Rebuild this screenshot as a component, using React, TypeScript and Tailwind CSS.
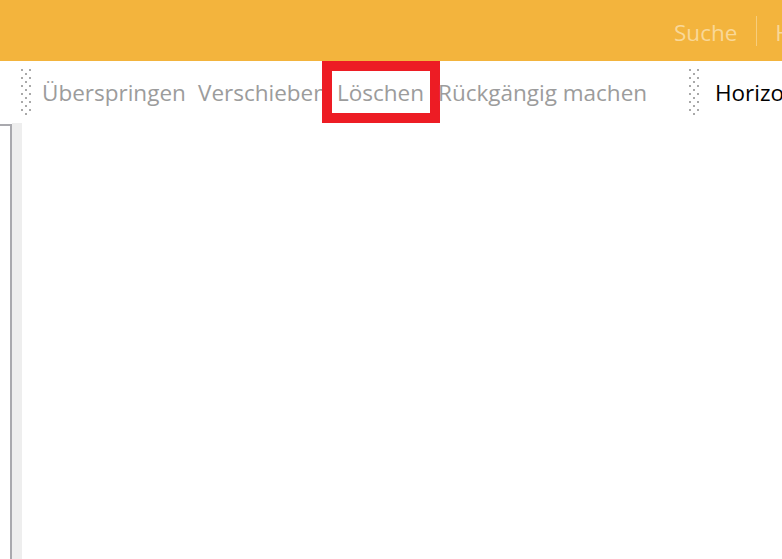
import React from "react";

const actions = [
  { label: "Überspringen", width: "w-[156px]" },
  { label: "Verschieben", width: "w-[140px]" },
  { label: "Löschen", width: "w-[100px]" },
  { label: "Rückgängig machen", width: "w-[250px]" },
];

const Gripper = () => (
  <div className="flex h-[46px] w-[10px] shrink-0 flex-col justify-between">
    {Array.from({ length: 12 }).map((_, i) => (
      <div key={i} className={`flex h-[2px] ${i % 2 === 0 ? "justify-between" : "justify-center"}`}>
        {i % 2 === 0 ? (
          <>
            <span className="h-[2px] w-[2px] bg-[#a9a9a9]" />
            <span className="h-[2px] w-[2px] bg-[#a9a9a9]" />
          </>
        ) : (
          <span className="h-[2px] w-[2px] bg-[#a9a9a9]" />
        )}
      </div>
    ))}
  </div>
);

export default function App() {
  return (
    <div className="flex h-[559px] w-[782px] flex-col overflow-hidden bg-white font-['Open_Sans',sans-serif]">
      {/* Title bar */}
      <header className="flex h-[61px] shrink-0 items-center whitespace-nowrap bg-[#f3b43d] pl-[674px] text-[22.5px] text-[#f9d898]">
        <span className="shrink-0 pt-[4px]">Suche</span>
        <span className="ml-[19px] mr-[18px] mt-[1px] h-[30px] w-[1px] shrink-0 bg-[#f7cd7c]" />
        <span className="shrink-0 pt-[4px]">H</span>
      </header>

      {/* Command bar */}
      <div className="flex h-[62px] shrink-0 items-center whitespace-nowrap pl-[21px] text-[22.5px] text-[#9c9c9c]">
        <Gripper />
        <div className="ml-[11px] flex shrink-0 items-center">
          {actions.map((a) =>
            a.label === "Löschen" ? (
              <span
                key={a.label}
                className="ml-[-16px] mr-[-2px] flex h-[62px] w-[118px] shrink-0 items-center border-[10px] border-[#ed1c24] pl-[5px] pt-[1px]"
              >
                {a.label}
              </span>
            ) : (
              <span key={a.label} className={`${a.width} shrink-0 pt-[1px]`}>
                {a.label}
              </span>
            )
          )}
        </div>
        <div className="ml-[1px] shrink-0">
          <Gripper />
        </div>
        <span className="ml-[16px] shrink-0 pt-[1px] text-black">Horizontal</span>
      </div>

      {/* Content */}
      <div className="flex min-h-0 flex-1">
        <div className="mt-[1px] w-[12px] shrink-0 border-r-2 border-t-2 border-[#a9a9ae]" />
        <div className="w-[10px] shrink-0 bg-[#eeeeee]" />
        <div className="flex-1 bg-white" />
      </div>
    </div>
  );
}
